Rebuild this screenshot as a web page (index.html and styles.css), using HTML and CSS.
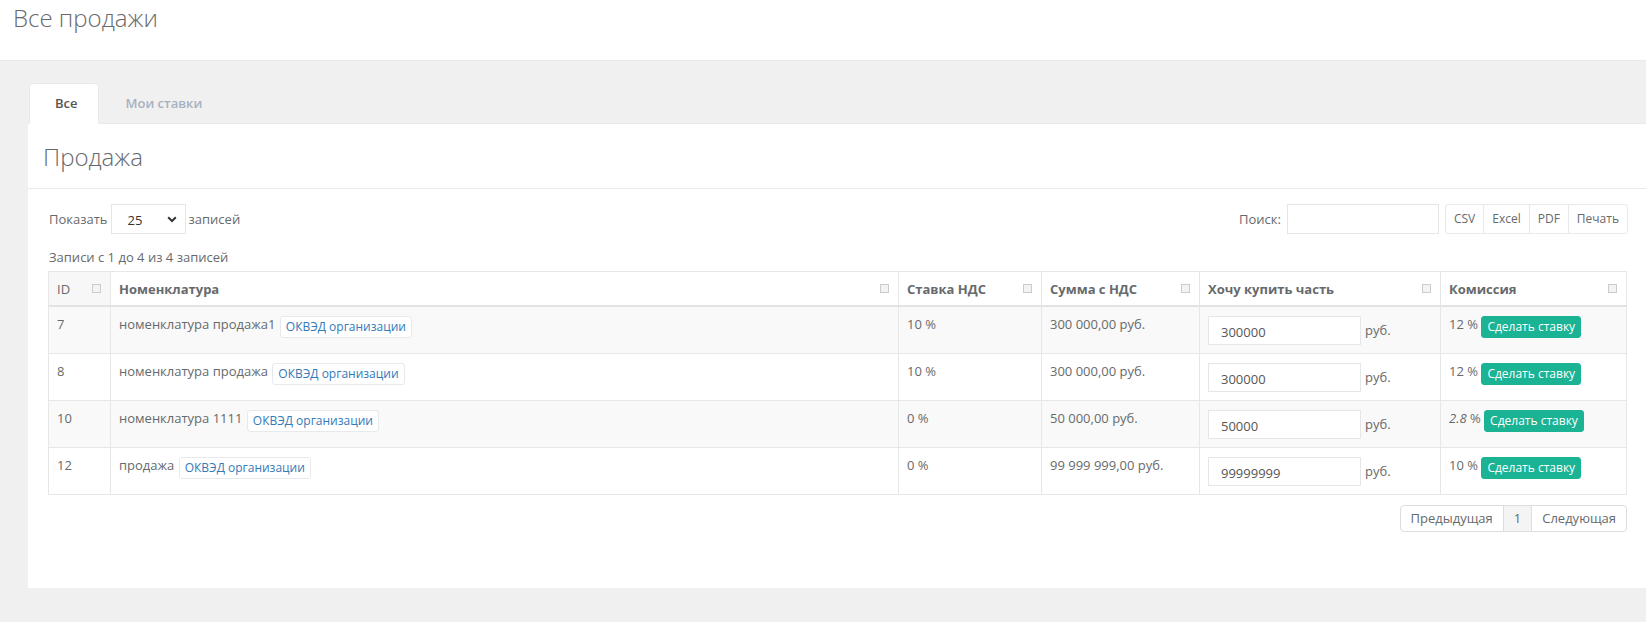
FILE: index.html
```html
<!DOCTYPE html>
<html lang="ru">
<head>
<meta charset="utf-8">
<title>Все продажи</title>
<link rel="stylesheet" href="styles.css">
</head>
<body>
<header class="page-header">
  <h1 class="page-title">Все продажи</h1>
</header>
<main class="wrapper">
  <ul class="tabs">
    <li class="tab tab-active">Все</li>
    <li class="tab">Мои ставки</li>
  </ul>
  <section class="panel">
    <h2 class="panel-title">Продажа</h2>
    <div class="panel-body">
      <div class="controls">
        <div class="length">
          <span>Показать</span>
          <div class="select"><span>25</span>
            <svg width="10" height="7" viewBox="0 0 10 7"><path d="M1.2 1.3 L5 5 L8.8 1.3" fill="none" stroke="#333" stroke-width="2"/></svg>
          </div>
          <span>записей</span>
        </div>
        <div class="tools">
          <span class="search-label">Поиск:</span>
          <input class="search" type="text">
          <div class="btn-group">
            <span class="gbtn">CSV</span><span class="gbtn">Excel</span><span class="gbtn">PDF</span><span class="gbtn">Печать</span>
          </div>
        </div>
      </div>
      <div class="info">Записи с 1 до 4 из 4 записей</div>
      <table class="grid">
        <colgroup>
          <col class="c-id"><col class="c-name"><col class="c-vat"><col class="c-sum"><col class="c-buy"><col class="c-fee">
        </colgroup>
        <thead>
          <tr>
            <th class="th-sorted"><div class="th-in"><span>ID</span><i class="sort"></i></div></th>
            <th><div class="th-in"><span>Номенклатура</span><i class="sort"></i></div></th>
            <th><div class="th-in"><span>Ставка НДС</span><i class="sort"></i></div></th>
            <th><div class="th-in"><span>Сумма с НДС</span><i class="sort"></i></div></th>
            <th><div class="th-in"><span>Хочу купить часть</span><i class="sort"></i></div></th>
            <th><div class="th-in"><span>Комиссия</span><i class="sort"></i></div></th>
          </tr>
        </thead>
        <tbody>
          <tr class="odd">
            <td>7</td>
            <td>номенклатура продажа1 <span class="badge">ОКВЭД организации</span></td>
            <td>10 %</td>
            <td>300 000,00 руб.</td>
            <td><div class="buy"><input class="amount" type="text" value="300000"><span>руб.</span></div></td>
            <td>12 % <span class="bid">Сделать ставку</span></td>
          </tr>
          <tr>
            <td>8</td>
            <td>номенклатура продажа <span class="badge">ОКВЭД организации</span></td>
            <td>10 %</td>
            <td>300 000,00 руб.</td>
            <td><div class="buy"><input class="amount" type="text" value="300000"><span>руб.</span></div></td>
            <td>12 % <span class="bid">Сделать ставку</span></td>
          </tr>
          <tr class="odd">
            <td>10</td>
            <td>номенклатура 1111 <span class="badge">ОКВЭД организации</span></td>
            <td>0 %</td>
            <td>50 000,00 руб.</td>
            <td><div class="buy"><input class="amount" type="text" value="50000"><span>руб.</span></div></td>
            <td><em>2.8</em> % <span class="bid">Сделать ставку</span></td>
          </tr>
          <tr>
            <td>12</td>
            <td>продажа <span class="badge">ОКВЭД организации</span></td>
            <td>0 %</td>
            <td>99 999 999,00 руб.</td>
            <td><div class="buy"><input class="amount" type="text" value="99999999"><span>руб.</span></div></td>
            <td>10 % <span class="bid">Сделать ставку</span></td>
          </tr>
        </tbody>
      </table>
      <div class="pager-row">
        <div class="pagination">
          <span class="page">Предыдущая</span><span class="page page-current">1</span><span class="page">Следующая</span>
        </div>
      </div>
    </div>
  </section>
</main>
</body>
</html>
```

FILE: styles.css
```css
html, body {
  margin: 0;
  padding: 0;
}
body {
  background: #f0f0f0;
  font-family: "Open Sans", "Liberation Sans", Arial, sans-serif;
  font-size: 13px;
  line-height: 1.42857;
  color: #676a6c;
}
.page-header {
  background: #fff;
  height: 60px;
  border-bottom: 1px solid #e7eaec;
  box-sizing: content-box;
}
.page-title {
  margin: 0;
  padding: 5px 0 0 13px;
  font-size: 24px;
  font-weight: 300;
  line-height: 1.1;
  color: #676a6c;
}
.wrapper {
  padding: 22px 0 0 28px;
}
.tabs {
  list-style: none;
  margin: 0;
  padding: 0;
  display: flex;
  border-bottom: 1px solid #e7eaec;
}
.tab {
  padding: 10px 20px 10px 25px;
  font-weight: 600;
  color: #a7b1c2;
  border: 1px solid transparent;
  border-radius: 4px 4px 0 0;
  margin-bottom: -1px;
  margin-left: 1px;
}
.tab-active {
  background: #fff;
  color: #555;
  border-color: #e7eaec #e7eaec #fff;
}
.panel {
  background: #fff;
}
.panel-title {
  margin: 0;
  padding: 20px 15px 18px;
  font-size: 24px;
  font-weight: 300;
  line-height: 1.1;
  color: #676a6c;
  border-bottom: 1px solid #e7eaec;
}
.panel-body {
  padding: 15px 20px 20px 20px;
}
.controls {
  display: flex;
  justify-content: space-between;
  align-items: center;
  height: 30px;
}
.length {
  display: flex;
  align-items: center;
  gap: 3px;
  padding-left: 1px;
}
.select {
  width: 75px;
  height: 30px;
  box-sizing: border-box;
  border: 1px solid #e5e6e7;
  display: flex;
  align-items: center;
  justify-content: space-between;
  padding: 2px 8px 0 16px;
  color: #333;
}
.tools {
  display: flex;
  align-items: center;
}
.search-label {
  margin-right: 6px;
}
.search {
  width: 152px;
  height: 30px;
  box-sizing: border-box;
  border: 1px solid #e5e6e7;
  margin: 0 7px 0 0;
  padding: 4px 8px;
  font: inherit;
}
.btn-group {
  display: flex;
  margin-right: -2px;
}
.gbtn {
  height: 30px;
  box-sizing: border-box;
  padding: 0 8px;
  display: flex;
  align-items: center;
  border: 1px solid #e7eaec;
  margin-left: -1px;
  font-size: 12px;
  color: #676a6c;
}
.gbtn:first-child {
  border-radius: 3px 0 0 3px;
}
.gbtn:last-child {
  border-radius: 0 3px 3px 0;
}
.info {
  margin-top: 14px;
  padding-left: 1px;
  color: #676a6c;
}
.grid {
  margin-top: 4px;
  width: 100%;
  table-layout: fixed;
  border-collapse: collapse;
  border: 1px solid #e7e7e7;
}
.c-id { width: 62px; }
.c-name { width: 788px; }
.c-vat { width: 143px; }
.c-sum { width: 158px; }
.c-buy { width: 241px; }
.c-fee { width: 186px; }
.grid th {
  text-align: left;
  font-weight: 700;
  padding: 8px 8px 7px;
  border: 1px solid #e7e7e7;
  border-bottom: 2px solid #e3e3e3;
  white-space: nowrap;
}
.grid th.th-sorted {
  font-weight: 400;
  background: #f7f7f7;
}
.th-in {
  display: flex;
  align-items: center;
  justify-content: space-between;
}
.sort {
  display: block;
  width: 9px;
  height: 9px;
  box-sizing: border-box;
  border: 1px solid #cccccc;
  background: #f3f3f3;
  margin-right: 1px;
}
.grid td {
  padding: 8px;
  border: 1px solid #e7e7e7;
  vertical-align: top;
  white-space: nowrap;
}
.grid tr.odd td {
  background: #f9f9f9;
}
.badge {
  display: inline-block;
  padding: 1px 5px;
  font-size: 12px;
  line-height: 18px;
  border: 1px solid #e7eaec;
  border-radius: 3px;
  background: #fff;
  color: #337ab7;
  vertical-align: -2px;
  margin-left: 1px;
}
.buy {
  display: flex;
  align-items: center;
  gap: 4px;
}
.amount {
  width: 153px;
  height: 29px;
  margin: 1px 0 0;
  box-sizing: border-box;
  border: 1px solid #e5e6e7;
  padding: 4px 12px 2px;
  font: inherit;
  color: #555;
}
.bid {
  display: inline-block;
  padding: 1px 5px;
  font-size: 12px;
  line-height: 18px;
  border: 1px solid #1ab394;
  border-radius: 3px;
  background: #1ab394;
  color: #fff;
  vertical-align: -2px;
}
.pager-row {
  display: flex;
  justify-content: flex-end;
  margin: 10px -1px 36px 0;
}
.pagination {
  display: flex;
}
.page {
  padding: 4px 10px;
  line-height: 17px;
  border: 1px solid #ddd;
  margin-left: -1px;
  color: #676a6c;
  background: #fff;
}
.page:first-child {
  border-radius: 4px 0 0 4px;
}
.page:last-child {
  border-radius: 0 4px 4px 0;
}
.page-current {
  background: #f4f4f4;
}
```
